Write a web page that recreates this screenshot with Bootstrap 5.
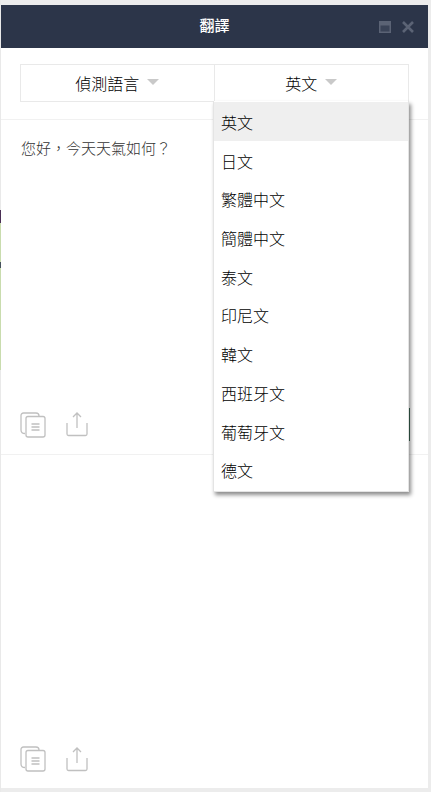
<!DOCTYPE html>
<html lang="zh-Hant">
<head>
  <meta charset="UTF-8">
  <title>翻譯</title>
  <link href="https://cdn.jsdelivr.net/npm/bootstrap@5.3.2/dist/css/bootstrap.min.css" rel="stylesheet">
  <style>
    html, body {
      height: 100%;
    }
    body {
      background: linear-gradient(#e9e9e9 210px, #4a2f55 210px, #4a2f55 223px, #c9dcae 223px, #c9dcae 262px, #46525c 262px, #46525c 268px, #c9dcae 268px, #c9dcae 370px, #e9e9e9 370px) 0 0 / 1px 100% no-repeat, #ececec;
      font-family: "Liberation Sans", "Noto Sans CJK TC", sans-serif;
      padding: 5px 3px 4px 1px;
    }
    .trans-window {
      height: 100%;
      background-color: #fff;
    }
    .trans-header {
      height: 43px;
      background-color: #2c3549;
      color: #fff;
      font-size: 15px;
      font-weight: 500;
    }
    .header-tools {
      right: 14px;
      top: 0;
      bottom: 0;
      gap: 11px;
    }
    .lang-bar {
      padding: 16px 19px 17px;
      border-bottom: 1px solid #f1f1f1;
    }
    .lang-box {
      border: 1px solid #e9e9e9;
      height: 38px;
    }
    .lang-btn {
      height: 36px;
      border: 0;
      border-radius: 0;
      background: none;
      color: #000;
      font-size: 16px;
      font-weight: 300;
      padding: 3px 0 0;
    }
    .lang-btn:first-child {
      border-right: 1px solid #e9e9e9;
    }
    .caret-down {
      display: inline-block;
      width: 0;
      height: 0;
      margin-left: 8px;
      vertical-align: 5px;
      border-left: 6px solid transparent;
      border-right: 6px solid transparent;
      border-top: 6px solid #c9c9c9;
    }
    .lang-menu.dropdown-menu {
      top: 53px;
      left: 212px;
      width: 196px;
      min-width: 0;
      margin: 0;
      padding: 1px 0 2px;
      border: 1px solid #e4e4e4;
      border-top: 0;
      border-radius: 0;
      box-shadow: 2px 3px 4px rgba(0, 0, 0, .45);
      z-index: 5;
    }
    .lang-menu .dropdown-item {
      height: 38.7px;
      line-height: 43px;
      padding: 0 7px;
      color: #000;
      font-size: 16px;
      font-weight: 300;
    }
    .lang-menu .dropdown-item.active {
      background-color: #efefef;
    }
    .text-pane {
      height: 335px;
      padding: 18px 20px 0;
      color: #333;
      font-family: "Liberation Sans", "Noto Sans CJK SC", sans-serif;
      font-size: 15px;
      font-weight: 300;
      border-bottom: 1px solid #f1f1f1;
    }
    .pane-tools {
      bottom: 13px;
      left: 19px;
      right: 18px;
    }
    .result-pane .pane-tools {
      bottom: 16px;
    }
    .tool-icons {
      gap: 20px;
    }
    .send-btn {
      width: 80px;
      height: 33px;
      border-radius: 0;
      background-color: #3d6b58;
      border: 0;
    }
  </style>
</head>
<body>

<div class="trans-window d-flex flex-column">
  <div class="trans-header position-relative d-flex align-items-center justify-content-center">
    <span>翻譯</span>
    <div class="header-tools position-absolute d-flex align-items-center">
      <svg width="12" height="12" viewBox="0 0 12 12"><path d="M0 0h12v12H0z" fill="#5b6375"/><path d="M1.500 4.500h9v6h-9z" fill="#3a4357"/></svg>
      <svg width="12" height="12" viewBox="0 0 12 12"><path d="M1 1l10 10M11 1L1 11" stroke="#5b6375" stroke-width="2.600" fill="none"/></svg>
    </div>
  </div>

  <div class="lang-bar position-relative">
    <div class="lang-box d-flex">
      <button class="lang-btn btn flex-fill w-50" type="button">偵測語言<span class="caret-down"></span></button>
      <button class="lang-btn btn flex-fill w-50" type="button">英文<span class="caret-down"></span></button>
    </div>
    <ul class="lang-menu dropdown-menu show position-absolute">
      <li><a class="dropdown-item active" href="#">英文</a></li>
      <li><a class="dropdown-item" href="#">日文</a></li>
      <li><a class="dropdown-item" href="#">繁體中文</a></li>
      <li><a class="dropdown-item" href="#">簡體中文</a></li>
      <li><a class="dropdown-item" href="#">泰文</a></li>
      <li><a class="dropdown-item" href="#">印尼文</a></li>
      <li><a class="dropdown-item" href="#">韓文</a></li>
      <li><a class="dropdown-item" href="#">西班牙文</a></li>
      <li><a class="dropdown-item" href="#">葡萄牙文</a></li>
      <li><a class="dropdown-item" href="#">德文</a></li>
    </ul>
  </div>

  <div class="text-pane position-relative">
    您好，今天天氣如何？
    <div class="pane-tools position-absolute d-flex align-items-center justify-content-between">
      <div class="tool-icons d-flex align-items-center">
        <svg width="26" height="26" viewBox="0 0 26 26" fill="none" stroke="#c0c0c0" stroke-width="1.300"><path d="M5 21.500C2.500 21.500 1 20.500 1 18V3.500C1 2 2 1 3.500 1H16c1.500 0 3 1 3 3"/><rect x="6" y="4.500" width="19" height="20.500" rx="2" fill="#fff"/><path d="M11.500 12h8M11.500 15h8M11.500 18h8"/></svg>
        <svg width="22" height="25" viewBox="0 0 22 25" fill="none" stroke="#c0c0c0" stroke-width="1.300"><path d="M11 16V1M7 5l4-4 4 4M1 11v11c0 1 .5 1.500 1.500 1.500h17c1 0 1.500-.5 1.500-1.500V11"/></svg>
      </div>
      <button class="send-btn btn" type="button" aria-label="翻譯"></button>
    </div>
  </div>

  <div class="result-pane position-relative flex-fill">
    <div class="pane-tools position-absolute d-flex align-items-center">
      <div class="tool-icons d-flex align-items-center">
        <svg width="26" height="26" viewBox="0 0 26 26" fill="none" stroke="#c0c0c0" stroke-width="1.300"><path d="M5 21.500C2.500 21.500 1 20.500 1 18V3.500C1 2 2 1 3.500 1H16c1.500 0 3 1 3 3"/><rect x="6" y="4.500" width="19" height="20.500" rx="2" fill="#fff"/><path d="M11.500 12h8M11.500 15h8M11.500 18h8"/></svg>
        <svg width="22" height="25" viewBox="0 0 22 25" fill="none" stroke="#c0c0c0" stroke-width="1.300"><path d="M11 16V1M7 5l4-4 4 4M1 11v11c0 1 .5 1.500 1.500 1.500h17c1 0 1.500-.5 1.500-1.500V11"/></svg>
      </div>
    </div>
  </div>
</div>

<script src="https://cdn.jsdelivr.net/npm/bootstrap@5.3.2/dist/js/bootstrap.bundle.min.js"></script>
</body>
</html>
